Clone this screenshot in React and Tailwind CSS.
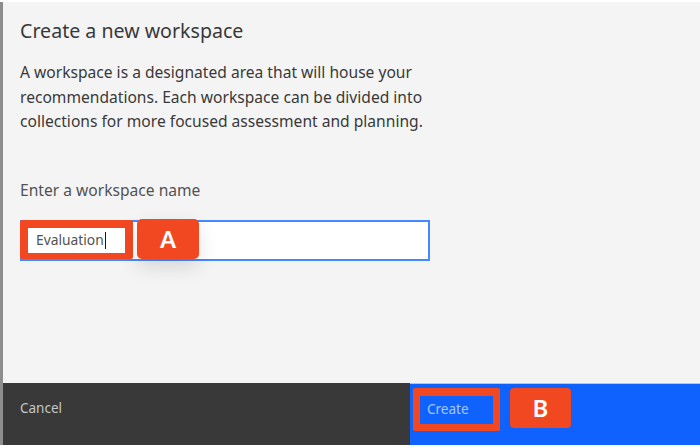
export default function App() {
  return (
    <div className="w-[700px] h-[448px] bg-white pt-[2px] pb-[3px] overflow-hidden" style={{ fontFamily: '"Noto Sans", "Open Sans", sans-serif' }}>
      <div className="h-full flex flex-col bg-[#f4f4f4] border-l-[3px] border-[#8d8d8d]">
        {/* ── Body ── */}
        <div className="flex-1 pl-[17px] pr-4">
          <h2 className="mt-[17px] text-[19.6px] leading-[24px] text-[#393939]">Create a new workspace</h2>
          <p className="mt-[17px] text-[15.6px] leading-[24.5px] text-[#393939]">
            A workspace is a designated area that will house your
            <br />
            recommendations. Each workspace can be divided into
            <br />
            collections for more focused assessment and planning.
          </p>

          <label className="block mt-[45px] text-[15.6px] leading-[22px] text-[#525252]">Enter a workspace name</label>

          <div className="mt-[19px] relative w-[410px] h-[41px] bg-white border-2 border-[#4589ff]">
            {/* annotation A */}
            <div className="absolute -left-[2px] -top-[2px] w-[113px] h-[39px] bg-[#f24822] rounded-[2px] pt-[8px] pl-[8px]">
              <div className="w-[97px] h-[25px] bg-white flex items-center pl-[8px] text-[13.8px] text-[#525252]">
                Evaluation<span className="w-[1px] h-[17px] bg-[#161616] ml-[1px]" />
              </div>
            </div>
            <div className="absolute left-[115px] -top-[3px] w-[62px] h-[40px] bg-[#f24822] rounded-[5px] shadow-[0_8px_20px_rgba(0,0,0,0.12)] flex items-center justify-center text-white text-[24px] font-semibold">
              A
            </div>
          </div>
        </div>

        {/* ── Footer ── */}
        <div className="h-[62px] flex text-[13.5px]">
          <div className="w-[407px] bg-[#393939] pl-[17px] pt-[15px] leading-[20px] text-[#c6c6c6]">Cancel</div>
          <div className="flex-1 bg-[#0f62fe] border-t border-[#a6c8ff] flex items-start pt-[4px] pl-[3px] gap-[10px]">
            <div className="w-[87px] h-[43px] bg-[#f24822] rounded-[2px] p-[7px] pt-[8px]">
              <div className="w-full h-full bg-[#0f62fe] flex items-center pl-[7px] pb-[2px] text-[#a6c8ff]">Create</div>
            </div>
            <div className="w-[61px] h-[40px] bg-[#f24822] rounded-[4px] flex items-center justify-center text-white text-[24px] font-semibold">
              B
            </div>
          </div>
        </div>
      </div>
    </div>
  );
}
